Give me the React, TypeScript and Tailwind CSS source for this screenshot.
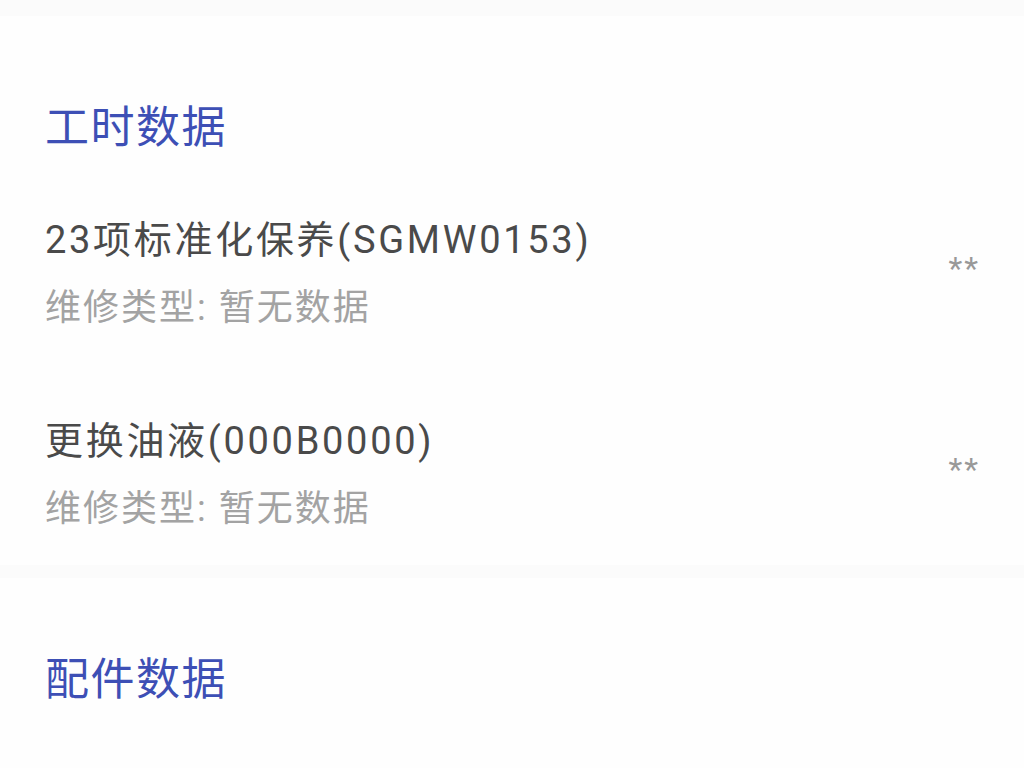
import React from "react";

const FONT = "Roboto, 'Noto Sans CJK SC', 'Noto Sans', sans-serif";

type Item = { name: string; kind: string };

const laborItems: Item[] = [
  { name: "23项标准化保养(SGMW0153)", kind: "暂无数据" },
  { name: "更换油液(000B0000)", kind: "暂无数据" },
];

function SectionTitle({ children }: { children: React.ReactNode }) {
  return (
    <h2 className="text-[44px] leading-[56px] font-normal text-[#3d4fb5] tracking-[1.5px]">
      {children}
    </h2>
  );
}

function LaborRow({ item }: { item: Item }) {
  return (
    <div className="flex items-center justify-between">
      <div className="flex flex-col gap-[20px]">
        <div className="text-[38px] leading-[48px] text-[#4a4a4a] tracking-[2.7px]">{item.name}</div>
        <div className="text-[36px] leading-[48px] text-[#a3a3a3] tracking-[2px]">
          维修类型: {item.kind}
        </div>
      </div>
      <div className="text-[32px] leading-[30px] text-[#999999] tracking-[2px] pb-[12px]">**</div>
    </div>
  );
}

export default function App() {
  return (
    <div className="w-[1024px] h-[768px] overflow-hidden bg-[#fbfbfb]" style={{ fontFamily: FONT }}>
      <div className="h-[16px]" />
      <section className="bg-[#fefefe] pt-[84px] pb-[32px] pl-[45px] pr-[44px]">
        <SectionTitle>工时数据</SectionTitle>
        <div className="mt-[60px] flex flex-col gap-[85px]">
          {laborItems.map((it) => (
            <LaborRow key={it.name} item={it} />
          ))}
        </div>
      </section>
      <div className="h-[13px]" />
      <section className="bg-[#fefefe] pt-[74px] pb-[60px] pl-[45px] pr-[44px]">
        <SectionTitle>配件数据</SectionTitle>
      </section>
    </div>
  );
}
